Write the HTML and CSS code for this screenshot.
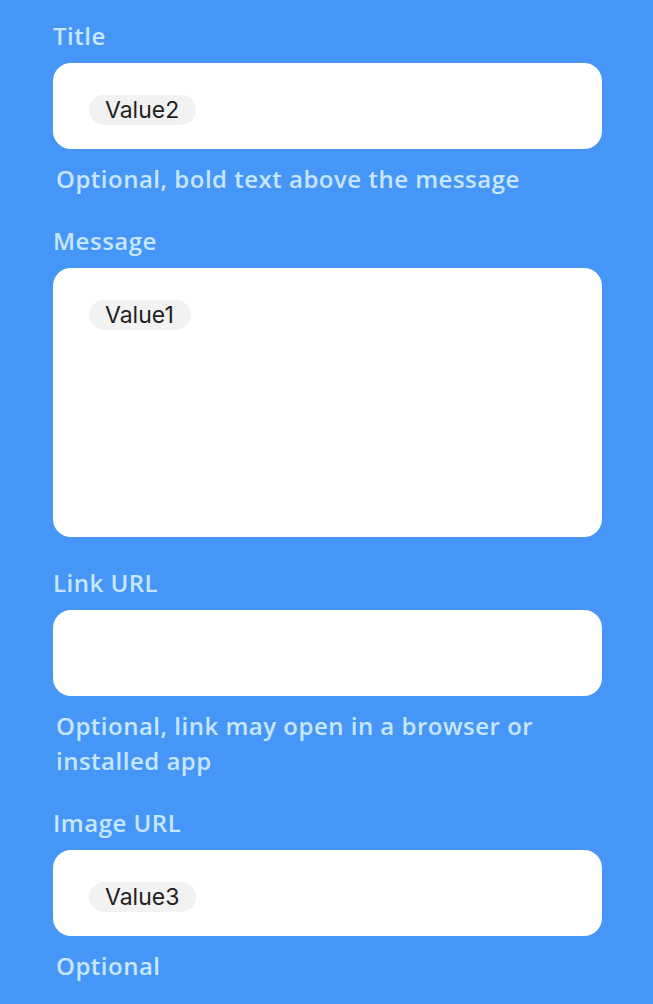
FILE: index.html
```html
<!DOCTYPE html>
<html>
<head>
<meta charset="utf-8">
<link rel="stylesheet" href="styles.css">
</head>
<body>
<div class="form">
  <div class="field">
    <div class="label">Title</div>
    <div class="box"><span class="pill">Value2</span></div>
    <div class="help">Optional, bold text above the message</div>
  </div>
  <div class="field nohelp">
    <div class="label">Message</div>
    <div class="box tall"><span class="pill">Value1</span></div>
  </div>
  <div class="field">
    <div class="label">Link URL</div>
    <div class="box"></div>
    <div class="help">Optional, link may open in a browser or<br>installed app</div>
  </div>
  <div class="field">
    <div class="label">Image URL</div>
    <div class="box"><span class="pill">Value3</span></div>
    <div class="help">Optional</div>
  </div>
</div>
</body>
</html>
```
FILE: styles.css
```css
html, body {
  margin: 0;
  padding: 0;
  background: #4596f7;
}
body {
  width: 653px;
  height: 1004px;
  overflow: hidden;
  font-family: "Open Sans", "Noto Sans", sans-serif;
}
.form {
  padding: 21px 51px 0 53px;
  display: flex;
  flex-direction: column;
}
.field {
  display: flex;
  flex-direction: column;
  margin-bottom: 30px;
}
.field.nohelp {
  margin-bottom: 31px;
}
.label {
  font-size: 24px;
  font-weight: 600;
  letter-spacing: 0.5px;
  line-height: 30px;
  color: #c8e6fe;
}
.box {
  margin-top: 12px;
  height: 86px;
  background: #fff;
  border-radius: 18px;
  padding: 32px 36px 0;
  box-sizing: border-box;
  display: flex;
  align-items: flex-start;
}
.box.tall {
  height: 269px;
}
.pill {
  display: inline-block;
  height: 30px;
  line-height: 30px;
  padding: 0 17px 0 16px;
  border-radius: 15px;
  background: #f2f2f2;
  color: #1f1f1f;
  font-family: Inter, "Liberation Sans", sans-serif;
  font-size: 23px;
}
.help {
  margin-top: 12px;
  margin-left: 3px;
  font-size: 24px;
  font-weight: 600;
  letter-spacing: 0.5px;
  line-height: 35px;
  color: #c8e6fe;
}
```
